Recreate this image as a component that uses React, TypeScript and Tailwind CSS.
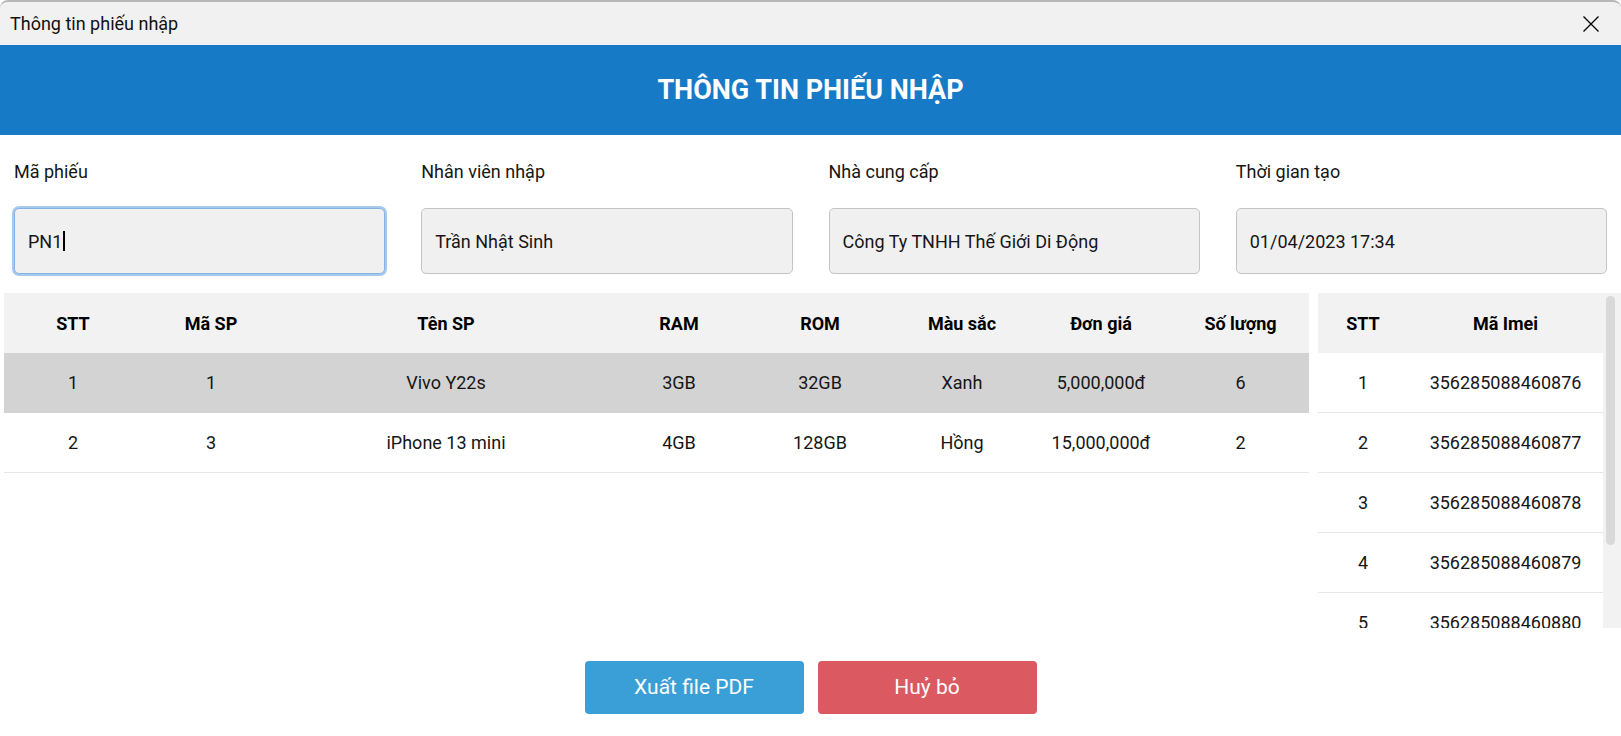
const fields = [
  { label: "Mã phiếu", value: "PN1", focused: true },
  { label: "Nhân viên nhập", value: "Trần Nhật Sinh" },
  { label: "Nhà cung cấp", value: "Công Ty TNHH Thế Giới Di Động" },
  { label: "Thời gian tạo", value: "01/04/2023 17:34" },
];

const columns = ["STT", "Mã SP", "Tên SP", "RAM", "ROM", "Màu sắc", "Đơn giá", "Số lượng"];

const products = [
  ["1", "1", "Vivo Y22s", "3GB", "32GB", "Xanh", "5,000,000đ", "6"],
  ["2", "3", "iPhone 13 mini", "4GB", "128GB", "Hồng", "15,000,000đ", "2"],
];

const imeis = [
  "356285088460876",
  "356285088460877",
  "356285088460878",
  "356285088460879",
  "356285088460880",
];

const productGrid =
  "grid grid-cols-[138px_138px_332px_134px_148px_136px_142px_137px]";

export default function App() {
  return (
    <div className="h-[736px] w-full overflow-hidden bg-white font-['Roboto',sans-serif] text-[18px] text-[#161616]">
      {/* title bar */}
      <div className="flex h-[45px] items-center justify-between rounded-t-[8px] border-t-2 border-[#b7b7b7] bg-[#f1f1f1] pl-[10px] pr-[22px]">
        <span className="text-[18px] text-[#111]">Thông tin phiếu nhập</span>
        <svg width="16" height="16" viewBox="0 0 16 16" className="text-black">
          <path d="M0.5 0.5 L15.5 15.5 M15.5 0.5 L0.5 15.5" stroke="currentColor" strokeWidth="1.3" />
        </svg>
      </div>

      {/* banner */}
      <div className="flex h-[90px] items-center justify-center bg-[#177ac6]">
        <h1 className="text-[27px] font-bold text-white">THÔNG TIN PHIẾU NHẬP</h1>
      </div>

      {/* form */}
      <div className="grid grid-cols-4 gap-x-[36px] px-[14px] pt-[26px]">
        {fields.map((f) => (
          <div key={f.label} className="flex flex-col">
            <label className="h-[22px] leading-[22px]">{f.label}</label>
            <div
              className={[
                "mt-[25px] flex h-[66px] items-center rounded-[5px] bg-[#f0f0f0] px-[13px]",
                f.focused
                  ? "border border-[#86b3e2] shadow-[0_0_0_2px_#a6caee]"
                  : "border border-[#c4c4c4]",
              ].join(" ")}
            >
              <span>{f.value}</span>
              {f.focused && <span className="ml-[1px] inline-block h-[20px] w-[2px] bg-black" />}
            </div>
          </div>
        ))}
      </div>

      {/* tables */}
      <div className="mt-[19px] flex h-[335px] pl-[4px]">
        <div className="w-[1305px]">
          <div className={`${productGrid} h-[60px] items-center bg-[#f2f2f2] font-bold text-black`}>
            {columns.map((c) => (
              <div key={c} className="text-center">
                {c}
              </div>
            ))}
          </div>
          {products.map((row, i) => (
            <div
              key={row[0]}
              className={[
                productGrid,
                "h-[60px] items-center border-b",
                i === 0 ? "border-[#d3d3d3] bg-[#d3d3d3]" : "border-[#e6e6e6] bg-white",
              ].join(" ")}
            >
              {row.map((cell, j) => (
                <div key={j} className="text-center">
                  {cell}
                </div>
              ))}
            </div>
          ))}
        </div>

        <div className="ml-[9px] flex flex-1 overflow-hidden">
          <div className="w-[285px]">
            <div className="grid h-[60px] grid-cols-[90px_1fr] items-center bg-[#f2f2f2] font-bold text-black">
              <div className="text-center">STT</div>
              <div className="text-center">Mã Imei</div>
            </div>
            {imeis.map((code, i) => (
              <div
                key={code}
                className="grid h-[60px] grid-cols-[90px_1fr] items-center border-b border-[#e6e6e6]"
              >
                <div className="text-center">{i + 1}</div>
                <div className="text-center">{code}</div>
              </div>
            ))}
          </div>
          <div className="flex-1 bg-[#f2f2f2] pl-[3px] pt-[3px]">
            <div className="h-[249px] w-[9px] rounded-full bg-[#d9d9d9]" />
          </div>
        </div>
      </div>

      {/* actions */}
      <div className="flex justify-center gap-[14px] pt-[33px]">
        <button className="h-[53px] w-[219px] rounded-[4px] bg-[#3a9fd6] text-[21px] text-white">
          Xuất file PDF
        </button>
        <button className="h-[53px] w-[219px] rounded-[4px] bg-[#db5960] text-[21px] text-white">
          Huỷ bỏ
        </button>
      </div>
    </div>
  );
}
